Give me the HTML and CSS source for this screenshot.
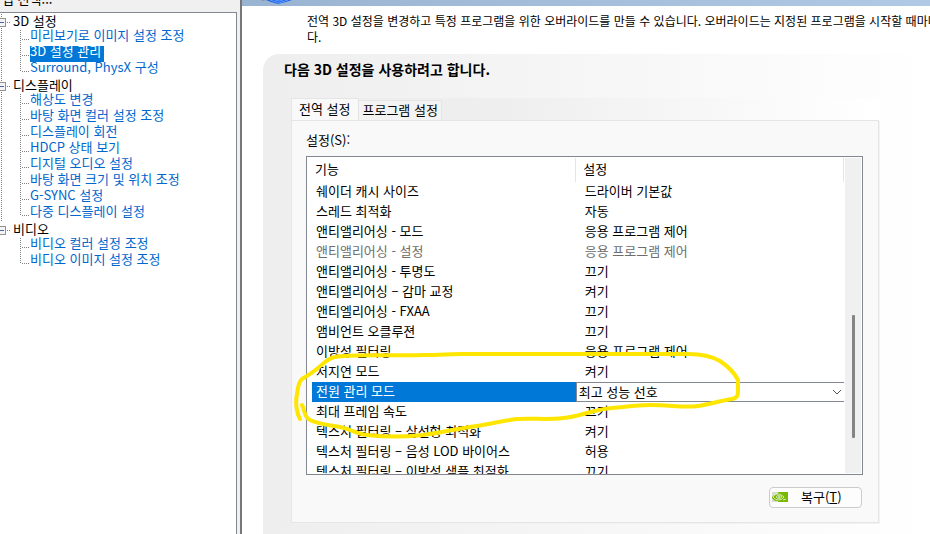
FILE: index.html
```
<!DOCTYPE html>
<html lang="ko">
<head>
    <meta charset="UTF-8">
    <meta name="viewport" content="width=device-width, initial-scale=1.0">
    <title>3D 설정 관리</title>
    <link rel="stylesheet" href="styles.css">
</head>
<body>
    <aside class="sidebar">
        <div class="sidebar-title"><span>업 선택...</span></div>
        <nav class="tree">
            <section class="tree-group">
                <h2><span class="toggle"></span>3D 설정</h2>
                <ul>
                    <li><a href="#">미리보기로 이미지 설정 조정</a></li>
                    <li><a href="#" class="selected">3D 설정 관리</a></li>
                    <li><a href="#">Surround, PhysX 구성</a></li>
                </ul>
            </section>
            <section class="tree-group">
                <h2><span class="toggle"></span>디스플레이</h2>
                <ul>
                    <li><a href="#">해상도 변경</a></li>
                    <li><a href="#">바탕 화면 컬러 설정 조정</a></li>
                    <li><a href="#">디스플레이 회전</a></li>
                    <li><a href="#">HDCP 상태 보기</a></li>
                    <li><a href="#">디지털 오디오 설정</a></li>
                    <li><a href="#">바탕 화면 크기 및 위치 조정</a></li>
                    <li><a href="#">G-SYNC 설정</a></li>
                    <li><a href="#">다중 디스플레이 설정</a></li>
                </ul>
            </section>
            <section class="tree-group">
                <h2><span class="toggle"></span>비디오</h2>
                <ul>
                    <li><a href="#">비디오 컬러 설정 조정</a></li>
                    <li><a href="#">비디오 이미지 설정 조정</a></li>
                </ul>
            </section>
        </nav>
    </aside>

    <main>
        <div class="banner">
            <svg width="36" height="6" viewBox="0 0 36 6">
                <path d="M3 0h5l-3 1z" fill="#8a8f98"/>
                <path d="M8 0h26l-6 2-8 2-7-2z" fill="#1f62e8"/>
                <path d="M12 0l9 3 9-3M17 0l4 1 4-1" fill="none" stroke="#5f9bff"/>
            </svg>
        </div>
        <p class="intro">전역 3D 설정을 변경하고 특정 프로그램을 위한 오버라이드를 만들 수 있습니다. 오버라이드는 지정된 프로그램을 시작할 때마다<br>다.</p>

        <section class="panel">
            <h1>다음 3D 설정을 사용하려고 합니다.</h1>
            <div class="tabs">
                <button class="tab active">전역 설정</button>
                <button class="tab">프로그램 설정</button>
            </div>
            <div class="tab-page">
                <p class="list-label">설정(S):</p>
                <div class="list-wrap">
                    <div class="list">
                        <table>
                            <thead>
                                <tr><th>기능</th><th>설정</th></tr>
                            </thead>
                            <tbody>
                                <tr><td><span>쉐이더 캐시 사이즈</span></td><td>드라이버 기본값</td></tr>
                                <tr><td><span>스레드 최적화</span></td><td>자동</td></tr>
                                <tr><td><span>앤티앨리어싱 - 모드</span></td><td>응용 프로그램 제어</td></tr>
                                <tr class="disabled"><td><span>앤티앨리어싱 - 설정</span></td><td>응용 프로그램 제어</td></tr>
                                <tr><td><span>앤티앨리어싱 - 투명도</span></td><td>끄기</td></tr>
                                <tr><td><span>앤티앨리어싱 – 감마 교정</span></td><td>켜기</td></tr>
                                <tr><td><span>앤티엘리어싱 - FXAA</span></td><td>끄기</td></tr>
                                <tr><td><span>앰비언트 오클루젼</span></td><td>끄기</td></tr>
                                <tr><td><span>이방성 필터링</span></td><td>응용 프로그램 제어</td></tr>
                                <tr><td><span>저지연 모드</span></td><td>켜기</td></tr>
                                <tr class="current">
                                    <td><label for="power-mode">전원 관리 모드</label></td>
                                    <td>
                                        <div class="combo">
                                            <select id="power-mode">
                                                <option>최고 성능 선호</option>
                                            </select>
                                            <svg width="10" height="6" viewBox="0 0 10 6"><path d="M1 1l4 4 4-4" fill="none" stroke="#555"/></svg>
                                        </div>
                                    </td>
                                </tr>
                                <tr><td><span>최대 프레임 속도</span></td><td>끄기</td></tr>
                                <tr><td><span>텍스처 필터링 – 삼선형 최적화</span></td><td>켜기</td></tr>
                                <tr><td><span>텍스처 필터링 – 음성 LOD 바이어스</span></td><td>허용</td></tr>
                                <tr><td><span>텍스처 필터링 – 이방성 샘플 최적화</span></td><td>끄기</td></tr>
                            </tbody>
                        </table>
                        <div class="scrollbar"><div class="thumb"></div></div>
                    </div>
                    <!-- hand-drawn highlight round the power mode row -->
                    <svg class="marker" width="455" height="100" viewBox="290 345 455 100">
                        <path d="M300 419C297 414 295 404 297 394C298 386 299 381 302 379C307 376 312 373 318 368C324 363 328 358 335 357C350 354 390 356 423 355C440 355 450 354 463 354H688C704 354 713 357 720 361C729 367 735 374 738 380V391C738 396 737 398 732 399C720 401 710 404 698 406C685 408 670 405 650 405C635 405 625 407 612 408C590 410 580 417 563 418C548 420 533 418 517 419C502 421 490 424 477 426C455 429 440 433 423 435C405 437 385 437 367 435C356 434 350 429 340 427C328 425 318 424 310 420C304 417 305 411 302 405"/>
                    </svg>
                </div>
                <div class="actions">
                    <button class="restore">
                        <svg width="16" height="10" viewBox="0 0 16 10">
                            <path d="M0 0h16v10H0z" fill="#76b900"/>
                            <path d="M0 0h6v2C3 2 1 4 0 5zM0 6c2 3 4 3 6 3v1H0z" fill="#d8dccf"/>
                            <path d="M1 5c2-4 7-4 11 0-3 4-8 4-11 0zM4 5c1-2 4-2 6 0-2 2-4 2-6 0zM11 8l3-1" fill="none" stroke="#dcebc0"/>
                            <circle cx="7" cy="5" r="1" fill="#dcebc0"/>
                        </svg>
                        <span>복구(<u>T</u>)</span>
                    </button>
                </div>
            </div>
        </section>
    </main>
</body>
</html>
```
FILE: styles.css
```
:root {
    --link: #0066cc;
    --select: #0078d7;
    --frame: #828790;
    --face: #f0f0f0;
    --line: #e5e5e5;
}

* { box-sizing: border-box; }
h1, h2, p, ul { margin: 0; padding: 0; font-weight: normal; }

body {
    margin: 0;
    display: flex;
    height: 100vh;
    overflow: hidden;
    background: #fff;
    color: #000;
    font-family: "Noto Sans CJK KR", sans-serif;
    font-size: 13px;
    line-height: 16px;
}

button, select {
    font: inherit;
    color: inherit;
}

/* left tree */
.sidebar {
    flex: 0 0 242px;
    display: flex;
    flex-direction: column;
    background: var(--face);
    border-right: 2px solid #777;
    padding-right: 3px;
}

.sidebar-title {
    height: 12px;
    padding: 0 0 5px 2px;
    display: flex;
    align-items: flex-end;
    overflow: hidden;
}

.tree {
    flex: 1;
    background: #fff;
    border: 1px solid var(--frame);
    border-width: 1px 1px 0 0;
    padding-top: 1px;
    white-space: nowrap;
}

.tree-group {
    background: repeating-linear-gradient(#808080 0 1px, #fff 1px 2px) 1px 0 / 1px 100% no-repeat;
}

.tree-group:last-child { background: none; }

.tree-group h2 {
    display: flex;
    align-items: center;
    height: 16px;
    font-size: 13px;
    line-height: 16px;
    padding-bottom: 2px;
    background: repeating-linear-gradient(90deg, #808080 0 1px, #fff 1px 2px) 7px 8px / 4px 1px no-repeat;
}

.toggle {
    width: 6px;
    height: 9px;
    margin: 2px 7px 0 0;
    border: 1px solid #919191;
    border-left: 0;
    border-radius: 0 1px 1px 0;
    background: linear-gradient(#4b63a7, #4b63a7) 0 3px / 4px 1px no-repeat, #f4f4f4;
}

.tree ul { list-style: none; }

.tree li {
    display: flex;
    height: 16px;
    padding-left: 30px;
    background:
        repeating-linear-gradient(#808080 0 1px, #fff 1px 2px) 20px 0 / 1px 16px no-repeat,
        repeating-linear-gradient(90deg, #808080 0 1px, #fff 1px 2px) 20px 9px / 9px 1px no-repeat;
}

.tree li:last-child {
    background-size: 1px 10px, 9px 1px;
}

.tree a {
    height: 16px;
    line-height: 9px;
    color: var(--link);
    text-decoration: none;
}

.tree a.selected {
    background: var(--select);
    color: #fff;
    padding-right: 3px;
}

/* right side */
main {
    flex: 1;
    min-width: 0;
    display: flex;
    flex-direction: column;
}

.banner {
    display: flex;
    height: 6px;
    padding-left: 16px;
    background: linear-gradient(90deg, #99b3d2, #b0c9e4);
}

.intro {
    padding: 7px 0 9px 65px;
    font-size: 12px;
    white-space: nowrap;
}

.panel {
    flex: 1;
    margin-left: 21px;
    padding: 7px 51px 12px 28px;
    border-radius: 16px 0 0 0;
    background: linear-gradient(90deg, #eee, #fdfdfd 90%, #fff);
}

.panel h1 {
    margin: 0 0 21px -7px;
    font-size: 14px;
    font-weight: bold;
}

.tabs {
    display: flex;
    align-items: flex-end;
    height: 22px;
    background: linear-gradient(90deg, #eee 35%, #fff);
}

.tab {
    height: 20px;
    padding: 0 3px 2px;
    line-height: 16px;
    background: #f3f3f3;
    border: 1px solid var(--line);
    border-width: 1px 1px 0 0;
}

.tab.active {
    height: 22px;
    padding: 0 8px 2px 7px;
    background: #f9f9f9;
    border-left-width: 1px;
}

.tab-page {
    padding: 11px 15px 14px 14px;
    background: #f9f9f9;
    border: 1px solid var(--line);
    box-shadow: 1px 1px 0 #f2f2f2;
}

.list-label { margin-bottom: 8px; }

.list-wrap { position: relative; }

.list {
    display: flex;
    height: 319px;
    padding: 1px;
    background: #fff;
    border: 1px solid var(--frame);
    overflow: hidden;
}

table {
    width: 100%;
    align-self: flex-start;
    border-collapse: collapse;
    table-layout: fixed;
}

th, td {
    height: 20px;
    padding: 0 0 2px 9px;
    line-height: 18px;
    text-align: left;
    font-weight: normal;
    white-space: nowrap;
}

th {
    height: 24px;
    padding: 0 7px 2px;
    border-right: 1px solid var(--line);
}

td:first-child { padding-left: 4px; }

td span, td label {
    display: block;
    padding-left: 4px;
}

.disabled { color: #6d6d6d; }

.current td, .current td:first-child { padding-bottom: 0; }
.current td:last-child { padding-left: 0; }

.current label {
    height: 20px;
    color: #fff;
    background: var(--select);
}

.combo {
    display: flex;
    align-items: center;
    height: 20px;
    padding-right: 2px;
    border: 1px solid var(--frame);
    border-right: 0;
    background: #fff;
}

.combo select {
    flex: 1;
    padding: 0 2px;
    border: 0;
    background: none;
    appearance: none;
}

.scrollbar {
    flex: 0 0 16px;
    margin-left: 1px;
    padding: 157px 6px 0 7px;
    background: var(--face);
}

.thumb {
    height: 123px;
    background: #858585;
    border-radius: 1px;
}

.marker {
    position: absolute;
    left: -16px;
    top: 189px;
    fill: none;
    stroke: #ffe600;
    stroke-width: 4;
    stroke-linecap: round;
    stroke-linejoin: round;
    pointer-events: none;
}

.actions {
    display: flex;
    justify-content: flex-end;
    padding: 12px 1px 0 0;
}

.restore {
    display: flex;
    align-items: center;
    gap: 13px;
    width: 93px;
    height: 21px;
    padding: 0 2px 1px;
    background: #fdfdfd;
    border: 1px solid #ccc;
    border-radius: 4px;
}
```
